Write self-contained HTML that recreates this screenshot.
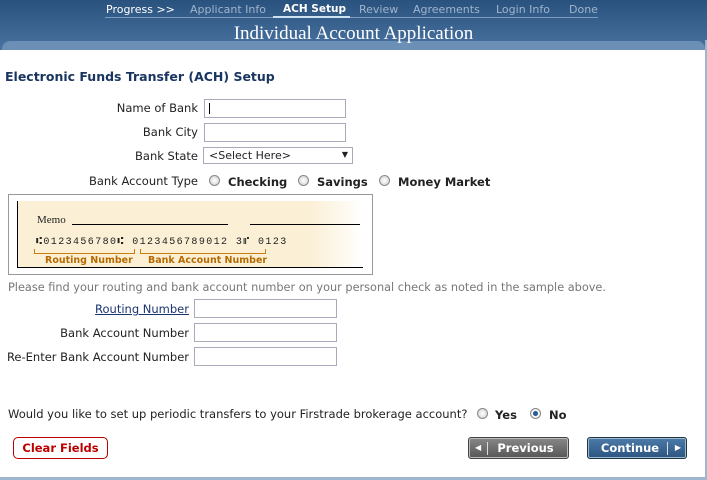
<!DOCTYPE html>
<html><head><style>
body{margin:0;width:707px;height:480px;overflow:hidden;background:#fff;font-family:"DejaVu Sans","Liberation Sans",sans-serif;font-size:11.5px;color:#222;position:relative}
.a{position:absolute;white-space:nowrap}
.hdr{left:0;top:0;width:707px;height:50px;background:linear-gradient(#2a527e,#4a72a0)}
.tab{left:2px;top:41px;width:703px;height:12px;background:#6c8fb6;border-radius:8px 8px 0 0}
.nav{top:3px;font-size:11px;color:#9fb4cc}
.title{left:0;width:707px;top:23px;text-align:center;font-family:"Liberation Serif",serif;font-size:19px;color:#fff}
.lbl{text-align:right;font-size:11.5px}
.in{background:#fff;border:1px solid #aab;height:17px;box-sizing:border-box}
.rad{width:11px;height:11px;border-radius:50%;border:1px solid #888;background:radial-gradient(#fff,#ccc);box-sizing:border-box}
b{font-weight:bold}
.btn{height:22px;border-radius:3px;box-sizing:border-box;font-weight:bold;font-size:11.5px;text-align:center;line-height:20px}
</style></head><body>
<div class="a hdr"></div>
<div class="a tab"></div>
<div class="a" style="left:0;top:50px;width:705px;height:428px;background:#fff"></div>
<div class="a" style="left:705px;top:40px;width:2px;height:440px;background:#9fb6d0"></div>
<div class="a" style="left:0;top:477px;width:707px;height:3px;background:#9fb6d0"></div>
<div class="a" style="left:105px;top:17px;width:493px;height:1px;background:#7f9cbd"></div>
<div class="a nav" style="left:106px;color:#fff">Progress &gt;&gt;</div>
<div class="a nav" style="left:190px">Applicant Info</div>
<div class="a nav" style="left:283px;color:#fff;font-weight:bold;font-size:10.5px">ACH Setup</div>
<div class="a" style="left:273px;top:16px;width:77px;height:2px;background:#cfe0f0"></div>
<div class="a nav" style="left:359px">Review</div>
<div class="a nav" style="left:413px">Agreements</div>
<div class="a nav" style="left:496px">Login Info</div>
<div class="a nav" style="left:569px">Done</div>
<div class="a title">Individual Account Application</div>
<div class="a" style="left:5px;top:69px;font-weight:bold;font-size:12.5px;color:#1a3560">Electronic Funds Transfer (ACH) Setup</div>

<div class="a lbl" style="right:509px;top:101px">Name of Bank</div>
<div class="a in" style="left:204px;top:99px;width:142px;height:19px"><div style="margin:3px 0 0 4px;width:1px;height:11px;background:#000"></div></div>
<div class="a lbl" style="right:509px;top:125px">Bank City</div>
<div class="a in" style="left:204px;top:123px;width:142px;height:19px"></div>
<div class="a lbl" style="right:509px;top:149px">Bank State</div>
<div class="a in" style="left:203px;top:147px;width:150px;padding:1px 5px;font-size:11px">&lt;Select Here&gt;<span style="position:absolute;right:4px;top:2px;font-size:8px">▼</span></div>
<div class="a lbl" style="right:509px;top:174px">Bank Account Type</div>
<div class="a rad" style="left:209px;top:175px"></div><div class="a" style="left:228px;top:175px"><b>Checking</b></div>
<div class="a rad" style="left:298px;top:175px"></div><div class="a" style="left:317px;top:175px"><b>Savings</b></div>
<div class="a rad" style="left:379px;top:175px"></div><div class="a" style="left:398px;top:175px"><b>Money Market</b></div>

<div class="a" style="left:8px;top:194px;width:363px;height:79px;border:1px solid #999;background:#fff"></div>
<div class="a" style="left:17px;top:201px;width:345px;height:66px;background:linear-gradient(90deg,#fbf0d6 85%,#fff);border-left:1px solid #000;border-bottom:1px solid #000"></div>
<div class="a" style="left:37px;top:214px;font-family:'Liberation Serif',serif;font-size:11px">Memo</div>
<div class="a" style="left:72px;top:224px;width:156px;height:1px;background:#000"></div>
<div class="a" style="left:250px;top:224px;width:110px;height:1px;background:#000"></div>
<div class="a" style="left:36px;top:236px;font-family:'Liberation Mono',monospace;font-size:10px;letter-spacing:1.4px">⑆0123456780⑆ 0123456789012 3⑈ 0123</div>
<div class="a" style="left:34px;top:249px;width:99px;height:4px;border:1px solid #c67f10;border-top:none"></div>
<div class="a" style="left:140px;top:249px;width:124px;height:4px;border:1px solid #c67f10;border-top:none"></div>
<div class="a" style="left:45px;top:255px;font-size:9.5px;font-weight:bold;color:#b56a00">Routing Number</div>
<div class="a" style="left:148px;top:255px;font-size:9.5px;font-weight:bold;color:#b56a00">Bank Account Number</div>

<div class="a" style="left:8px;top:281px;color:#777;font-size:11.3px">Please find your routing and bank account number on your personal check as noted in the sample above.</div>
<div class="a lbl" style="right:518px;top:302px;color:#1a3570;text-decoration:underline">Routing Number</div>
<div class="a in" style="left:194px;top:299px;width:143px;height:19px"></div>
<div class="a lbl" style="right:518px;top:326px">Bank Account Number</div>
<div class="a in" style="left:194px;top:323px;width:143px;height:19px"></div>
<div class="a lbl" style="right:518px;top:350px">Re-Enter Bank Account Number</div>
<div class="a in" style="left:194px;top:347px;width:143px;height:19px"></div>

<div class="a" style="left:8px;top:407px">Would you like to set up periodic transfers to your Firstrade brokerage account?</div>
<div class="a rad" style="left:477px;top:408px"></div><div class="a" style="left:495px;top:408px"><b>Yes</b></div>
<div class="a rad" style="left:530px;top:408px;background:radial-gradient(#2a5a9a 35%,#fff 45%,#ccc)"></div><div class="a" style="left:549px;top:408px"><b>No</b></div>

<div class="a btn" style="left:13px;top:437px;width:95px;border:1px solid #b00;color:#b00;border-radius:5px">Clear Fields</div>
<div class="a btn" style="left:468px;top:437px;width:101px;background:linear-gradient(#888,#555);border:1px solid #444;color:#fff;box-shadow:inset 0 0 0 1px #bbb"><span style="position:absolute;left:6px;font-size:8px">◀</span><span style="position:absolute;left:18px;top:4px;width:1px;height:13px;background:#ddd"></span><span style="margin-left:14px">Previous</span></div>
<div class="a btn" style="left:587px;top:437px;width:100px;background:linear-gradient(#4d7aa8,#2c5580);border:1px solid #234;color:#fff;box-shadow:inset 0 0 0 1px #9bc"><span style="margin-right:14px">Continue</span><span style="position:absolute;right:18px;top:4px;width:1px;height:13px;background:#ddd"></span><span style="position:absolute;right:5px;font-size:8px">▶</span></div>
</body></html>
